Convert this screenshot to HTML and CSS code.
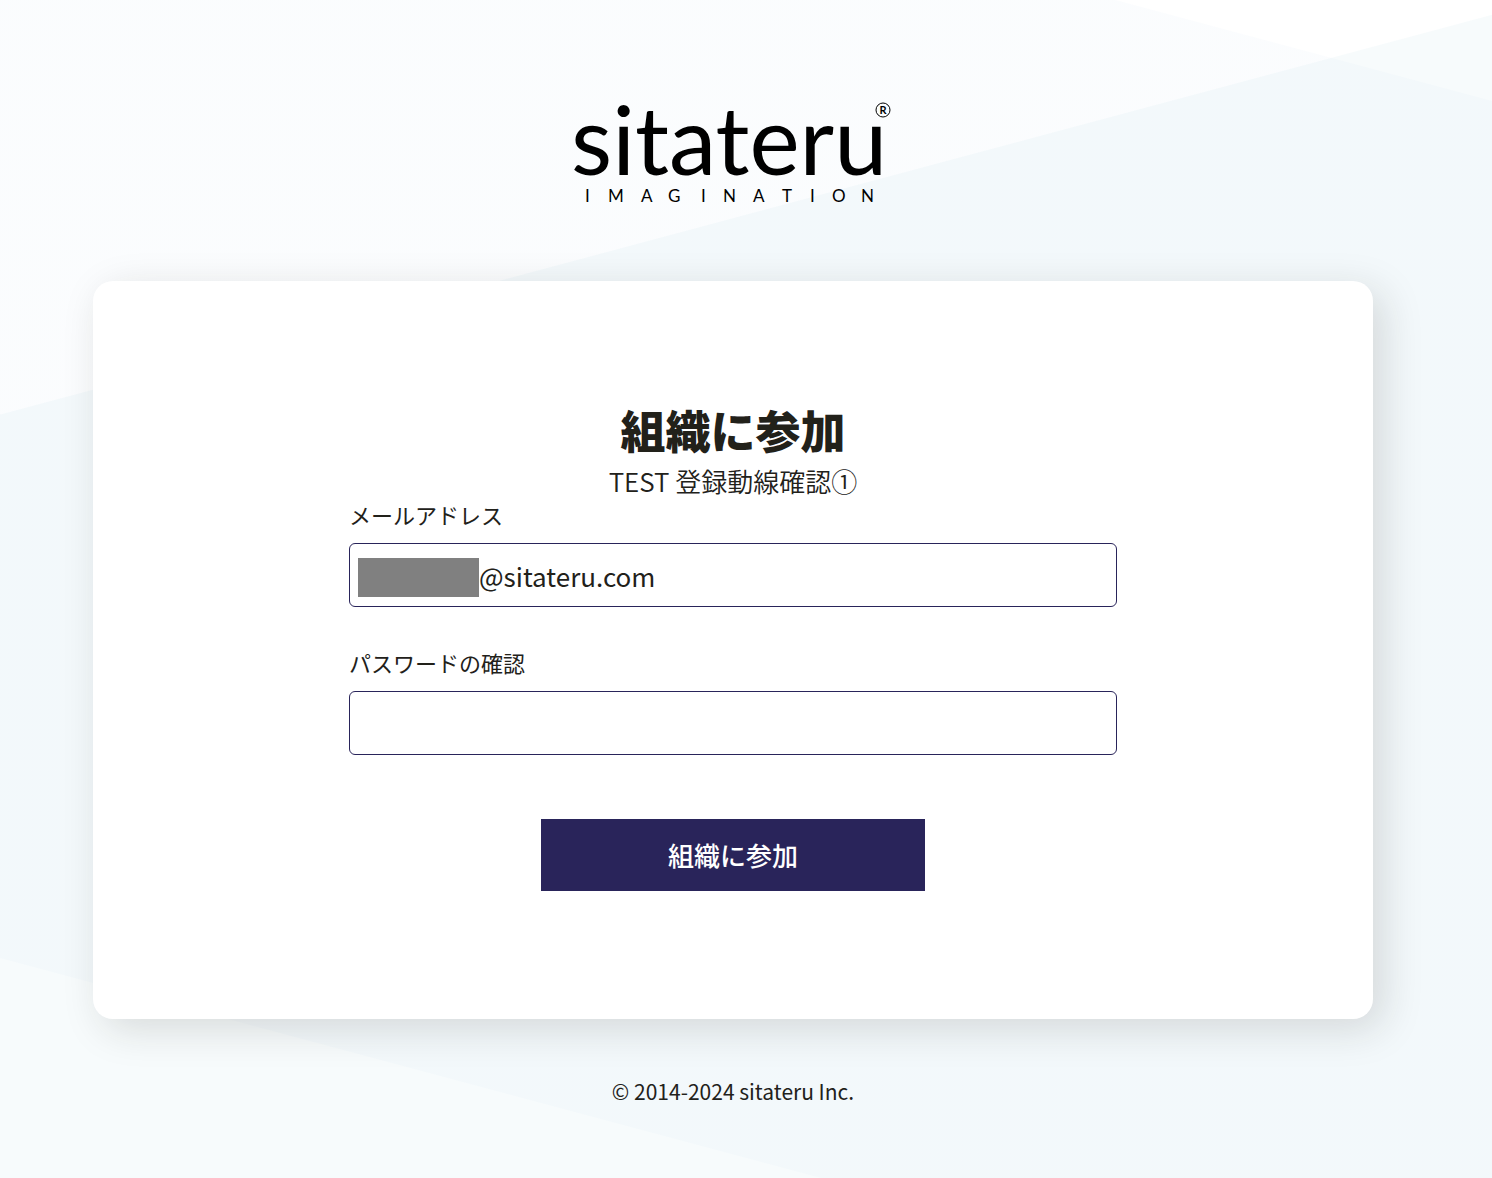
FILE: index.html
```html
<!DOCTYPE html>
<html lang="ja">
<head>
<meta charset="utf-8">
<meta name="viewport" content="width=device-width, initial-scale=1">
<title>組織に参加 | sitateru</title>
<link rel="stylesheet" href="styles.css">
</head>
<body>
<div class="page">
  <header class="header">
    <svg class="logo" viewBox="0 0 320 104" role="img" aria-label="sitateru imagination">
      <text class="logo-name" x="-3" y="75">sitateru</text>
      <text class="logo-tag" x="11 34 67 94 127 149 179 208 236 258 287" y="102">IMAGINATION</text>
      <circle class="logo-ring" cx="309" cy="10" r="7"/>
      <text class="logo-mark" x="309" y="14">R</text>
    </svg>
  </header>
  <main class="card">
    <h1 class="title">組織に参加</h1>
    <p class="organization">TEST 登録動線確認①</p>
    <form class="form">
      <div class="field">
        <label class="label" for="email">メールアドレス</label>
        <div class="control">
          <input class="input input-email" id="email" type="text" value="@sitateru.com">
          <span class="mask"></span>
        </div>
      </div>
      <div class="field">
        <label class="label" for="password">パスワードの確認</label>
        <input class="input" id="password" type="password">
      </div>
      <button class="submit" type="button">組織に参加</button>
    </form>
  </main>
  <footer class="footer">© 2014-2024 sitateru Inc.</footer>
</div>
</body>
</html>
```
FILE: styles.css
```css
* {
  box-sizing: border-box;
}

body {
  margin: 0;
  min-height: 100vh;
  color: #22211a;
  font-family: "Noto Sans CJK JP", sans-serif;
  background:
    linear-gradient(195deg, transparent 97px, rgba(120, 170, 220, 0.03) 98px, rgba(120, 170, 220, 0.03) 1311px, transparent 1312px),
    linear-gradient(165deg, #fff 400px, #f7fbfc 401px);
}

.page {
  display: flex;
  flex-direction: column;
  align-items: center;
  padding: 100px 26px 71px 0;
}

.header {
  padding-left: 2px;
  margin-bottom: 77px;
}

.logo {
  display: block;
  width: 320px;
  height: 104px;
  overflow: visible;
  font-family: Lato, sans-serif;
}

.logo-name {
  font-size: 95px;
}

.logo-tag {
  font-size: 17px;
}

.logo-ring {
  fill: none;
  stroke: #000;
}

.logo-mark {
  font-size: 11px;
  font-weight: 700;
  text-anchor: middle;
}

.card {
  width: 88%;
  max-width: 1280px;
  padding: 118px 0 128px;
  border-radius: 20px;
  background: #fff;
  box-shadow: 10px 10px 40px rgba(33, 33, 26, 0.15);
}

.title {
  margin: 0 0 2px;
  font-size: 45px;
  font-weight: 900;
  line-height: 62px;
  text-align: center;
}

.organization {
  margin: 0;
  font-size: 26px;
  font-weight: 350;
  line-height: 36px;
  text-align: center;
}

.form {
  display: flex;
  flex-direction: column;
  gap: 40px;
  width: 60%;
  margin: 0 auto;
}

.label {
  display: block;
  margin-bottom: 14px;
  font-size: 22px;
  line-height: 30px;
}

.control {
  position: relative;
}

.input {
  display: block;
  width: 100%;
  height: 64px;
  padding: 0 8px;
  border: 1px solid #29245a;
  border-radius: 6px;
  background: #fff;
  color: inherit;
  font: inherit;
  font-size: 26px;
}

.input-email {
  padding-left: 129px;
}

.mask {
  position: absolute;
  top: 15px;
  left: 9px;
  width: 121px;
  height: 39px;
  background: #808080;
}

.submit {
  align-self: center;
  width: 50%;
  height: 72px;
  margin-top: 24px;
  padding-bottom: 3px;
  border: 0;
  background: #29245a;
  color: #fff;
  font: inherit;
  font-size: 26px;
  font-weight: 500;
}

.footer {
  margin-top: 56px;
  font-size: 21px;
  line-height: 32px;
}
```
